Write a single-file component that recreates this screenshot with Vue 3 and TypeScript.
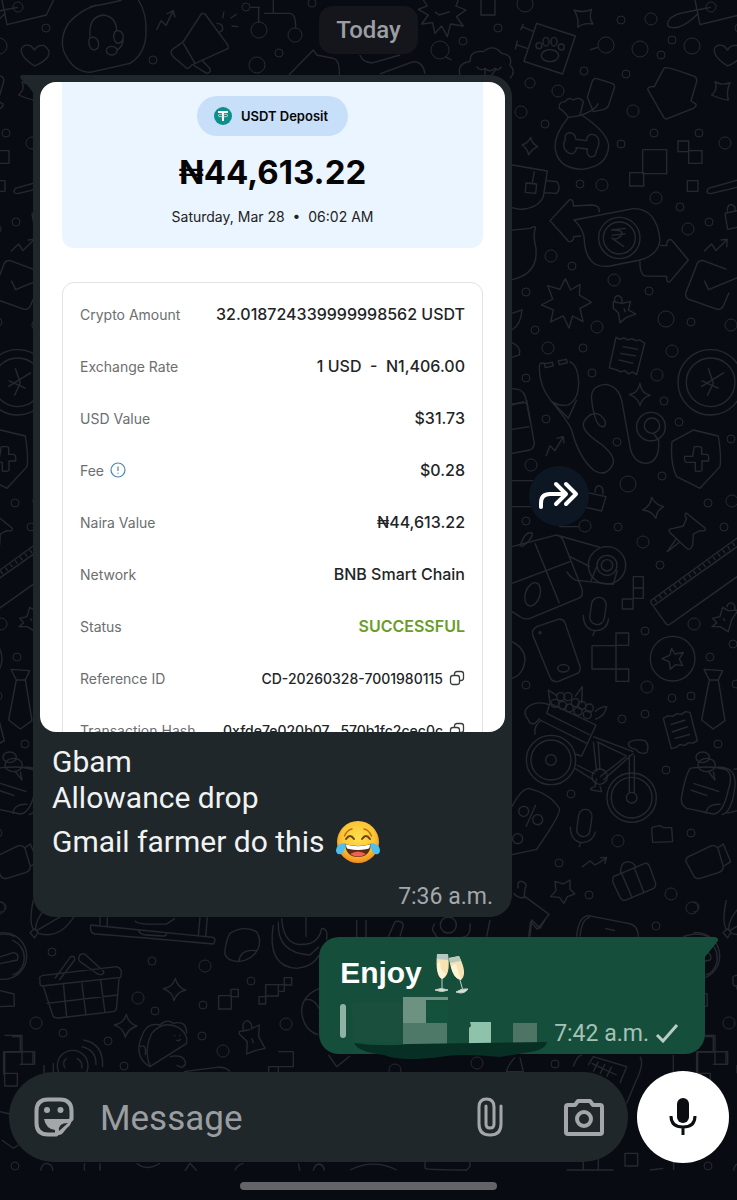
<script setup lang="ts">
interface Detail {
  label: string
  value: string
  kind?: 'info' | 'success' | 'copy'
}

const details: Detail[] = [
  { label: 'Crypto Amount', value: '32.018724339999998562 USDT' },
  { label: 'Exchange Rate', value: '1 USD \u00a0- \u00a0N1,406.00' },
  { label: 'USD Value', value: '$31.73' },
  { label: 'Fee', value: '$0.28', kind: 'info' },
  { label: 'Naira Value', value: '₦44,613.22' },
  { label: 'Network', value: 'BNB Smart Chain' },
  { label: 'Status', value: 'SUCCESSFUL', kind: 'success' },
  { label: 'Reference ID', value: 'CD-20260328-7001980115', kind: 'copy' },
  { label: 'Transaction Hash', value: '0xfde7e020b07...570b1fc2cec0c', kind: 'copy' },
]

type Dot = [number, number, number]

// Bubbles scattered between the wallpaper doodles: x, y, radius.
const dots: Dot[] = [
  [525, 4, 8], [621, 20, 4], [651, 19, 6], [711, 7, 5], [606, 45, 8], [640, 49, 8], [672, 40, 4], [661, 55, 4],
  [692, 46, 8], [584, 71, 4], [626, 74, 4], [530, 83, 5], [558, 91, 6], [521, 112, 6], [545, 124, 4], [633, 111, 6],
  [654, 133, 4], [699, 133, 4], [621, 144, 4], [725, 143, 6], [580, 184, 4], [602, 185, 6], [656, 198, 6],
  [680, 207, 4], [688, 229, 6], [709, 222, 4], [551, 256, 6], [572, 266, 4], [614, 280, 6], [649, 291, 4],
  [526, 292, 4], [597, 327, 6], [535, 330, 4], [666, 319, 8], [691, 322, 4], [731, 325, 6], [548, 348, 6],
  [583, 348, 4], [672, 351, 6], [592, 373, 4], [657, 375, 6], [526, 378, 4], [664, 401, 4], [546, 419, 4],
  [531, 465, 6], [617, 442, 4], [679, 422, 4], [731, 439, 4], [628, 484, 8], [662, 476, 4], [708, 503, 4],
  [732, 501, 6], [724, 527, 4], [526, 521, 4], [585, 526, 6], [618, 527, 4], [643, 542, 6], [660, 565, 4],
  [694, 624, 6], [645, 631, 4], [710, 657, 4], [733, 644, 4], [526, 685, 4], [647, 687, 6], [622, 719, 4],
  [645, 714, 4], [672, 698, 4], [691, 696, 4], [736, 684, 4], [718, 744, 4], [666, 770, 4], [571, 794, 4],
  [618, 841, 6], [691, 833, 4], [559, 863, 4], [589, 895, 4], [671, 894, 6], [692, 908, 6], [656, 926, 4],
  [52, 952, 4], [152, 961, 4], [205, 966, 6], [251, 981, 4], [138, 998, 6], [203, 1005, 4], [155, 1011, 4],
  [286, 1024, 6], [202, 1036, 4], [223, 1051, 6], [36, 1023, 6], [63, 1033, 4], [108, 1041, 4], [124, 1066, 4],
  [15, 1166, 4], [1, 907, 5], [477, 1063, 6], [555, 1064, 4], [395, 1070, 6], [46, 28, 4], [153, 60, 4],
  [279, 53, 4], [257, 65, 8], [246, 7, 4], [259, 30, 8], [295, 35, 7], [312, 3, 4], [463, 41, 4], [440, 50, 9],
  [498, 28, 4],
]

const berries: Dot[] = [
  [165, 70, 12], [182, 50, 12], [188, 76, 12], [204, 50, 12], [208, 84, 12], [226, 68, 12], [234, 94, 12],
  [246, 76, 12], [262, 104, 12], [268, 84, 12],
]
</script>

<template>
  <main class="chat">
    <svg class="wallpaper" aria-hidden="true">
      <defs>
        <g id="doodles">
          <circle v-for="(d, i) in dots" :key="i" :cx="d[0]" :cy="d[1]" :r="d[2]" />
          <g class="fine" transform="scale(.3333)">
            <path d="M270 20Q330 10 365 0M205 70Q240 30 290 15M205 70Q180 110 190 150Q215 215 270 217L390 190Q440 160 438 90Q440 40 415 0" />
            <path d="M270 110Q265 50 310 45Q350 50 350 95M268 115Q262 140 280 150Q300 150 295 125Q285 105 268 115M345 95Q335 115 350 130Q372 130 370 105Q360 85 345 95M370 120Q365 145 350 150" />
            <ellipse cx="335" cy="152" rx="16" ry="13" />
            <path d="M470 90L483 62L498 76L520 32M500 42L520 32L525 52" />
            <path d="M605 40L550 125L515 150Q510 160 520 170L560 205Q570 205 575 195L685 145Q685 135 680 130L615 42ZM550 130L585 190M580 195L620 220Q640 215 625 200L605 180M650 70Q670 70 668 90L655 100M672 35L668 55M692 55L710 42M695 78L715 80" />
            <path d="M752 22H780M792 40H870Q888 42 887 85M776 22V68M820 0V38M867 225L940 150L950 165L1000 175Q1020 180 1018 225M1080 165Q1090 190 1120 188L1200 165M1140 222L1240 185Q1270 185 1275 222" />
            <path d="M1270 0L1282 18L1255 28L1285 45L1265 72L1298 68L1305 100L1325 78L1342 110L1352 72L1390 78L1370 50L1398 30L1368 18L1375 0M1305 35L1318 45L1350 35M1443 0V45H1485V0M1335 170L1355 180" />
            <path d="M1380 225Q1370 190 1410 185Q1410 150 1450 155Q1480 130 1505 160Q1540 165 1530 195Q1550 215 1530 235M1430 200q10 15 25 5q15 15 30 0q10 10 20-5M1455 225V205M1475 225L1490 205" />
          </g>
          <g class="fine" transform="translate(500 0) scale(.3333)">
            <path d="M222 30Q250 40 275 28Q265 55 279 72Q250 68 233 82Q238 55 222 30ZM66 435Q84 430 92 412Q95 430 113 440Q95 448 86 465Q82 445 66 435ZM645 245Q665 258 690 248Q678 272 685 300Q665 298 635 285Q655 268 645 245ZM420 1150Q424 1180 450 1186Q426 1192 420 1216Q414 1192 388 1183Q414 1180 420 1150Z" />
            <path d="M110 70L226 108L188 222L72 184ZM70 72L62 90M66 80L104 96M52 122L46 148M48 134L84 146M270 150L293 142" />
            <ellipse cx="150" cy="167" rx="26" ry="18" /><circle cx="117" cy="137" r="9" /><ellipse cx="138" cy="125" rx="9" ry="13" /><ellipse cx="162" cy="125" rx="9" ry="13" /><circle cx="184" cy="141" r="9" />
            <path d="M288 235L336 250Q346 254 343 264L326 316Q322 326 312 328L280 335L262 292L276 246Q280 234 288 235ZM295 310Q275 345 205 352" />
            <path d="M205 352Q165 400 165 440Q170 505 245 508Q325 500 326 435Q320 395 245 345M205 352Q190 330 178 325Q175 305 195 305Q205 290 220 300Q240 288 250 305Q245 325 240 345" />
            <path d="M228 418Q225 398 208 398Q192 402 196 420Q188 430 193 445Q205 465 220 460Q232 450 228 443L262 447Q258 465 272 471Q290 470 289 452Q300 435 295 415Q285 400 270 404Q258 412 260 422Z" />
            <path d="M495 203Q505 200 580 228Q592 232 590 245L573 303L588 312Q590 320 580 325L500 357Q493 357 490 350L443 268Q445 258 463 260L488 212Q491 205 495 203Z" />
            <path d="M683 198Q640 170 643 148Q650 130 672 138L683 150Q690 135 710 136Q735 150 722 172Q705 190 683 198Z" />
            <path d="M428 449h72v72h-72ZM389 518h42v40h-42ZM534 423h32v32h-32ZM566 452h40v38h-40ZM562 542h32v32h-32ZM20 492L142 513L130 590Q115 625 60 628L20 620M137 542L170 545Q185 562 170 580L132 578M103 514L97 548M78 549l32 3l-3 28l-31-3Z" />
            <path d="M625 565L720 538M625 565Q615 580 632 581L720 560M675 640L720 630M675 640L683 688L720 680M682 638Q680 615 693 613Q708 617 706 633M612 754L635 732L648 752L682 718M662 720L682 718L680 742" />
            <path d="M298 637Q300 615 275 615L220 618Q222 600 210 598L150 662L205 724Q220 728 221 710L243 708M222 660L400 626Q470 625 480 720Q475 765 420 780L330 798Q255 810 252 710Q245 680 222 660ZM480 736L500 737Q500 715 515 720L565 780L510 845Q498 850 500 829L435 828Q418 822 420 782" />
            <circle cx="358" cy="714" r="62" /><circle cx="358" cy="714" r="48" />
            <path d="M333 690L378 685M335 706L376 701M340 690Q375 690 362 708Q350 722 335 714L372 740" />
            <path d="M20 692L90 685Q108 675 106 685Q98 705 108 745Q115 820 40 838L20 840M36 940L66 930Q62 975 36 990M36 1028Q65 1040 58 1065L36 1072M36 1166Q70 1166 76 1190L90 1260M36 1212L78 1208" />
            <path d="M196 836L212 870L240 853L238 885L274 907L240 925L249 965L218 948L207 984L190 948L152 966L160 930L124 915L158 897L143 857L180 868Z" />
            <path d="M340 905L365 910L392 905L385 930L408 942L378 953L360 968L355 938L340 925ZM345 905Q340 888 355 887Q368 890 366 908M372 925l4 12" />
            <path d="M348 1012l12 6l12-4l12 6l12-4l12 6l12-2l14 10L410 1124l-12-8l-12 6l-12-10l-12 4l-12-6l-22-6ZM368 1040L415 1048M360 1060L408 1068M356 1080L400 1090" />
            <path d="M680 808L610 782Q598 780 592 790L557 880Q555 892 566 898L652 928Q664 930 670 918L687 878M613 842L626 869L720 830" />
            <circle cx="632" cy="1147" r="98" /><circle cx="632" cy="1147" r="73" />
            <path d="M625 1105L640 1150L622 1187M672 1118L604 1160M605 1142L656 1165" />
            <path d="M118 1105Q115 1085 135 1090M208 1085Q235 1095 236 1150Q235 1200 205 1215Q180 1220 155 1205Q118 1160 118 1105M133 1092l24-5l3 11l-24 5ZM175 1083l24-5l3 11l-24 5ZM160 1210L205 1255L230 1200M275 1200Q270 1155 320 1153Q355 1160 365 1200" />
            <path d="M505 80Q495 55 540 40L632 22M505 80Q540 95 595 40M585 0L600 74L718 45L740 0" />
          </g>
          <g class="fine" transform="translate(500 400) scale(.3333)">
            <path d="M36 15L72 5M36 88L88 80M80 0L103 130Q102 145 90 150L36 160M138 168L150 137L165 152L190 110M170 115L190 110L192 130" />
            <path d="M155 5Q205 65 215 90Q235 170 280 210Q320 235 340 190Q345 165 300 130Q240 90 252 65Q275 30 300 45Q325 65 312 80Q285 85 275 0M365 0L392 150Q405 190 440 190Q480 185 476 120L460 100" />
            <circle cx="453" cy="80" r="43" /><circle cx="456" cy="77" r="23" />
            <path d="M516 125L580 90L655 108Q665 170 660 200L600 265L530 230Q510 190 516 125ZM583 140h16q6 0 6 6v17h15q7 2 6 10v10h-20v28q-5 5-20 2v-26h-28q-6-4-4-18h24Z" />
            <path d="M262 278L318 290L305 333L258 322M285 278Q285 258 298 257Q312 262 308 283M36 242H100M36 320H95M178 380H236M60 440Q75 390 98 400Q95 420 65 440" />
            <path d="M455 292Q466 315 491 320Q470 330 468 355Q455 332 428 330Q452 318 455 292Z" />
            <path d="M560 340L616 385Q618 395 600 392L580 402L578 435Q570 455 560 445L512 400Q500 385 520 385L550 378L560 355Q550 345 560 338M540 425L502 455L530 415" />
            <path d="M720 408L455 600Q450 605 455 612L497 670Q503 678 511 672L720 524M463 616L720 434" />
            <path class="ticks" d="M465 602L720 420" />
            <path d="M36 440L165 406Q180 404 188 418L247 570Q250 590 235 595L90 655Q70 660 60 650L36 635M36 550L210 485M105 430L178 610" />
            <ellipse cx="98" cy="583" rx="22" ry="36" transform="rotate(18 98 583)" />
            <circle cx="321" cy="496" r="56" /><circle cx="321" cy="496" r="30" /><circle cx="321" cy="496" r="17" />
            <path d="M180 408L300 442M210 470L270 500M200 515Q220 545 240 542L340 553L352 510M290 500L272 545" />
            <rect x="272" y="592" width="44" height="82" rx="22" transform="rotate(8 294 633)" />
            <path d="M250 645Q250 690 288 692Q322 690 326 655M284 692L278 708M400 530h30v65h-30ZM400 564h30M367 597h32v30h-32ZM276 737h72v70h-72ZM348 699h38v37h-38ZM348 807h38v37h-38Z" />
            <path d="M110 680L175 658Q190 656 195 668L240 800Q243 815 232 820L175 844Q160 848 152 836L98 705Q94 690 110 680Z" />
            <ellipse cx="190" cy="805" rx="17" ry="11" /><circle cx="120" cy="698" r="3" />
            <circle cx="518" cy="776" r="67" />
            <path d="M515 745l10 17l25-5l-12 20l10 20l-22-3l-15 14l-3-22l-22-10l23-10ZM638 655L660 650L668 622L685 632L715 630L695 660L685 695L660 680L636 680L650 668ZM680 622Q685 605 698 610Q710 620 702 632M670 655l5 8" />
            <path d="M612 808L668 812L655 840L628 840ZM628 840L605 960L640 987L675 962L655 840M36 725Q75 745 75 780Q70 825 36 835" />
          </g>
          <g class="fine" transform="translate(500 680) scale(.3333)">
            <circle cx="153" cy="240" r="74" /><circle cx="153" cy="240" r="60" /><circle cx="153" cy="240" r="16" />
            <circle cx="395" cy="353" r="74" /><circle cx="395" cy="353" r="61" /><circle cx="395" cy="353" r="16" />
            <circle cx="299" cy="290" r="23" />
            <circle v-for="(b, i) in berries" :key="i" :cx="b[0]" :cy="b[1]" :r="b[2]" />
            <path d="M280 170L400 215M290 185L380 228M380 228L300 290M400 220L310 300M280 185L290 275M295 190L300 270M388 225V338M403 225V338M225 265L280 300M230 255L285 282M385 190Q400 175 435 182Q450 195 440 218Q420 225 408 208Q385 205 385 190ZM290 295L285 320Q265 325 275 330L305 335L300 318" />
            <path d="M150 70L288 135L245 228L225 222M120 120L260 190M150 70L140 100L270 165M150 75Q110 60 85 80Q65 95 85 120Q90 135 105 130L120 115M105 165Q100 135 125 120M150 68L145 30L172 48M225 50L247 20L245 70M285 95Q300 80 320 80Q315 110 285 118" />
            <path d="M490 115l14-8l14 2l12-8l14 2l12-8l14 2L592 182l-14 8l-12-2l-12 8l-14-2l-12 8l-14 4ZM512 134L556 120M516 156L564 140M524 176L570 163" />
            <path d="M570 265Q640 255 680 270Q700 285 685 330Q670 400 640 402L560 385Q540 375 545 350Q555 290 570 265ZM580 310L658 335M572 330L622 347M645 262Q711 255 705 320Q695 400 665 404M618 402Q620 370 662 373M700 268Q730 260 740 300M680 400L740 385" />
            <ellipse cx="608" cy="232" rx="20" ry="16" /><ellipse cx="620" cy="255" rx="26" ry="20" />
            <path d="M625 275L645 300L640 275M36 380Q60 330 85 325Q150 340 178 385Q185 400 110 508L36 524M107 375L78 440" />
            <circle cx="71" cy="394" r="15" /><circle cx="113" cy="419" r="15" /><circle cx="53" cy="476" r="15" />
            <rect x="233" y="388" width="40" height="82" rx="20" transform="rotate(8 253 429)" />
            <path d="M211 440Q212 485 248 488Q280 485 286 455M242 488L237 502M455 447Q455 440 465 440L480 437L490 443L515 443L518 485L458 487ZM245 562L270 543L285 555L318 535M300 533L320 532L314 552" />
            <path d="M565 530L635 497Q650 495 655 508L670 560Q670 572 655 578L600 595Q585 598 580 585L558 545Q556 535 565 530ZM652 505L670 492L692 545L672 558" />
            <path d="M340 590L435 550Q445 548 449 560L467 610Q468 622 458 627L375 661Q365 662 360 652L338 605ZM362 580Q360 550 380 545Q400 545 408 562M365 580L395 650M403 563L432 638" />
            <path d="M165 604L190 612L210 600L210 628L225 642L202 650L192 670L178 652L152 650L168 632ZM55 625Q50 600 68 605Q85 615 75 625L72 655M40 640Q60 660 75 650L147 703L112 748L92 725L86 770M230 770Q235 710 265 707L385 730Q415 735 415 770M240 770Q245 715 270 712M315 745L345 752M550 770Q590 755 625 770" />
          </g>
          <g class="fine" transform="translate(0 900) scale(.3333)">
            <path d="M100 0Q85 70 102 90M140 20Q105 60 107 90M110 92L190 45M115 100Q180 120 225 45M90 98l12-12l12 10l-10 18Z" />
            <circle cx="10" cy="168" r="70" />
            <path d="M-30 180L40 158Q58 160 52 180L-20 195M0 272L42 282L43 318L0 320" />
            <path d="M272 75L640 112Q650 118 640 132Q400 110 285 102Q268 98 272 75M300 52V77M322 52V80M600 52L595 107M622 52L617 109M405 62Q410 75 500 72L525 55M415 90Q420 105 440 105L490 108Q500 108 500 98" />
            <path d="M690 100Q730 75 770 95Q785 120 775 145Q760 180 715 185Q670 180 675 150Q680 115 690 100ZM717 183Q722 145 770 152M845 55Q850 150 930 130Q960 120 965 85Q985 85 980 120M835 65Q830 160 930 165L957 140M820 75Q800 200 890 205Q940 200 957 165M918 52V110" />
            <path d="M120 240Q115 228 130 226L350 200Q370 205 362 232L125 258Q118 255 120 240ZM130 260L158 345Q160 355 175 354L340 335Q350 332 350 320L357 235M190 250L200 350M245 245L258 345M302 240L315 338M140 310L352 285M165 235L212 170Q225 165 224 180L178 240M240 165Q232 175 240 185L290 220Q310 230 312 215L255 163Q245 160 240 165" />
            <path d="M526 235Q532 262 557 270Q530 276 522 302Q518 276 490 266Q518 262 526 235ZM379 343Q385 370 411 378Q384 386 376 412Q372 386 343 375Q372 370 379 343Z" />
            <path d="M656 287h38v40h-38ZM693 268h22v22h-22ZM797 254h38v34h-38ZM777 290h20v22h-20ZM835 254h18v20h-18ZM853 233h22v22h-22ZM14 406h52v50h-52v102h38v-38h-38M66 455h38v38h-38ZM835 455h45v45h-45v20M806 520v-20h30" />
            <path d="M450 500L560 430Q565 400 535 382Q490 360 455 400Q430 450 450 500ZM450 500Q400 470 425 410Q440 365 480 375Q500 355 520 370Q560 360 560 400M420 440Q440 430 436 465M510 470Q550 460 557 490Q550 510 530 495M552 515L650 502Q680 500 690 515M524 405v4M540 405v4M528 420Q538 425 542 416" />
            <path d="M718 395L745 390L778 375L776 410L795 445L765 452L740 462L742 425L718 402ZM730 392Q725 365 742 362Q758 368 755 388M756 415l4 14" />
            <circle cx="218" cy="497" r="46" />
            <path d="M250 420Q310 430 308 500M245 440Q290 450 288 495M230 475Q250 485 245 505M200 475Q185 485 195 505M132 495V520M160 490V520M960 265Q905 285 905 335Q910 390 955 405M915 300Q940 290 960 330" />
            <path d="M0 635L30 642M5 720L40 745L55 735M122 812Q125 790 140 790Q158 792 158 812M255 790Q250 805 255 812M300 790V812M410 790Q440 815 480 790M555 812L570 790L590 812M705 812Q710 795 730 790M895 790L900 812M940 812Q945 792 957 792Q972 795 973 812" />
          </g>
          <g class="fine" transform="translate(310 920) scale(.3333)">
            <path d="M140 0V52M168 0V52M235 50L255 5Q275 0 280 15L270 50M375 10Q360 30 375 40Q380 60 400 52M455 52Q485 50 480 10M540 0L530 50M660 50L665 0L690 25L705 0" />
            <circle cx="415" cy="15" r="24" />
            <path d="M55 405L80 440L120 408M790 440Q800 410 815 405M835 435L850 410L950 440L930 490M845 430L920 465M865 425L850 455M885 432L870 462M905 440L890 470M990 410Q1005 430 975 490L950 550M1090 405V465M1160 395h50v-45h-25M1208 395h40v38h-40M1160 395V465M945 700h38v38h-38ZM1045 700h46v50M770 750H910M820 700V750M865 710V750M1020 750L1060 745M345 725V745Q350 750 470 750L480 740V725M120 750Q190 715 260 750M615 412Q590 440 590 455L640 455L630 412M1185 60Q1230 80 1220 130Q1210 160 1187 165" />
          </g>
        </g>
        <pattern id="tile" width="693" height="2400" patternUnits="userSpaceOnUse">
          <use href="#doodles" />
          <use href="#doodles" x="-693" />
        </pattern>
      </defs>
      <rect width="100%" height="100%" fill="url(#tile)" stroke="none" />
    </svg>

    <section class="thread" aria-label="Conversation">
      <time class="day">Today</time>

      <div class="incoming-row">
        <article class="bubble incoming">
          <svg class="tail-in" viewBox="0 0 40 30" aria-hidden="true">
            <path d="M2 0H40V30H14V20Q12 14 1 4Q-1 0 2 0Z" />
          </svg>
          <div class="receipt">
            <div class="inner">
              <header class="summary">
                <span class="token">
                  <svg class="tether" viewBox="0 0 18 18" aria-hidden="true">
                    <circle cx="9" cy="9" r="9" fill="#0c8f86" />
                    <path d="M4 4h10v2h-4v8H8V6H4Z" fill="#fff" />
                    <ellipse cx="9" cy="8.500" rx="5" ry="1.400" fill="none" stroke="#d5eeee" stroke-width=".8" />
                  </svg>
                  USDT Deposit
                </span>
                <strong class="amount">₦44,613.22</strong>
                <p class="when">Saturday, Mar 28&nbsp; •&nbsp; 06:02 AM</p>
              </header>
              <dl class="details">
                <div v-for="d in details" :key="d.label" class="detail" :class="d.kind">
                  <dt>
                    {{ d.label }}
                    <svg v-if="d.kind === 'info'" class="info-icon" viewBox="0 0 16 16" aria-hidden="true">
                      <circle cx="8" cy="8" r="7" />
                      <path d="M8 4.500V9M8 10.700V11.700" />
                    </svg>
                  </dt>
                  <dd>
                    {{ d.value }}
                    <button v-if="d.kind === 'copy'" class="copy-btn" type="button" :aria-label="'Copy ' + d.label">
                      <svg viewBox="0 0 16 16" aria-hidden="true">
                        <rect x="1.500" y="5.500" width="9" height="9" rx="2.500" />
                        <path d="M5.500 5.500V4Q5.500 1.500 8 1.500H12Q14.500 1.500 14.500 4V8Q14.500 10.500 12 10.500H10.500" />
                      </svg>
                    </button>
                  </dd>
                </div>
              </dl>
            </div>
          </div>
          <div class="caption">
            <p>Gbam</p>
            <p>Allowance drop</p>
            <p class="last">
              Gmail farmer do this
              <svg class="joy" viewBox="0 0 44 44" role="img" aria-label="Face with tears of joy">
                <defs>
                  <radialGradient id="skin" cx=".5" cy=".4" r=".6">
                    <stop offset="0" stop-color="#fddf4d" />
                    <stop offset=".65" stop-color="#fcc534" />
                    <stop offset="1" stop-color="#f08a1e" />
                  </radialGradient>
                </defs>
                <circle cx="22" cy="22" r="21" fill="url(#skin)" />
                <path d="M8.500 16Q11 10 16 9M35.500 16Q33 10 28 9" class="brow" />
                <path d="M10 19Q14 13 18 19M26 19Q30 13 34 19" class="eye" />
                <path d="M9 24Q22 28 35 24Q34 37 22 37Q10 37 9 24Z" fill="#5a2c12" />
                <path d="M10 24.500Q22 28 34 24.500Q34 29 31 29Q22 31 13 29Q10 29 10 24.500Z" fill="#fff" />
                <path d="M14 34Q22 29 30 34Q22 39 14 34Z" fill="#ef5f55" />
                <path d="M10 23Q1 23 0 30Q0 35 5 34Q9 32 10 23Z" fill="#4dc1ee" />
                <path d="M34 23Q43 23 44 30Q44 35 39 34Q35 32 34 23Z" fill="#4dc1ee" />
              </svg>
            </p>
          </div>
          <time class="stamp">7:36 a.m.</time>
        </article>
        <button class="forward" type="button" aria-label="Forward">
          <svg viewBox="0 0 60 60" aria-hidden="true">
            <path d="M12 41V37Q12 28 21 28H37M27 18L37 28L27 38M37 18L47 28L37 38" />
          </svg>
        </button>
      </div>

      <article class="bubble outgoing">
        <svg class="tail-out" viewBox="0 0 40 26" aria-hidden="true">
          <path d="M0 0H36Q41 1 38 5L26 20V26H0Z" />
        </svg>
        <p class="enjoy">
          Enjoy
          <svg class="glasses" viewBox="0 0 36 44" role="img" aria-label="Clinking glasses">
            <path d="M3 3L14 3Q17 25 8 28Q1 25 3 3Z" fill="#f6e3b4" />
            <path d="M3 3L14 3L14 9L3 8Z" fill="#b7c8c0" />
            <path d="M3 13Q3 25 8 28Q10 27 12 22Q6 22 6 10Z" fill="#fdf3d6" />
            <path d="M8 28V38M1 39Q7 36 14 39Q8 42 1 39Z" class="glass-line" />
            <path d="M15 7L25 5Q34 23 27 29Q18 28 15 7Z" fill="#f6e3b4" />
            <path d="M15 7L25 5L27 10L16 12Z" fill="#b7c8c0" />
            <path d="M17 15Q19 27 27 29Q25 22 22 13Z" fill="#fdf3d6" />
            <path d="M26 29L29 40M22 41Q28 37 34 38Q30 44 22 41Z" class="glass-line" />
          </svg>
        </p>
        <div class="foot">
          <svg class="smudge" viewBox="0 0 208 66" aria-hidden="true">
            <rect x="0" y="9" width="6" height="34" rx="3" fill="#8fb2a4" />
            <path d="M12 8H63V47H14Z" fill="#1a4f3e" />
            <path d="M63 2H108V5H86V28H63Z" fill="#6e9282" />
            <path d="M86 6Q95 8 108 5V28H86Z" fill="#15523d" />
            <rect x="63" y="28" width="44" height="21" fill="#4e7867" />
            <path d="M130 27H151V49H129V33L131 31Z" fill="#8fc2ab" />
            <rect x="173" y="28" width="24" height="21" fill="#4d7465" />
            <path d="M14 48Q40 52 70 49L207 47Q206 53 196 56L160 62Q120 58 100 62Q60 67 44 60Q18 57 14 48Z" fill="#082f23" />
          </svg>
          <time>7:42 a.m.</time>
          <svg class="sent" viewBox="0 0 24 20" role="img" aria-label="Sent">
            <path d="M2 12L8 18L22 2" />
          </svg>
        </div>
      </article>
    </section>

    <form class="composer" @submit.prevent>
      <div class="field">
        <button class="icon-btn" type="button" aria-label="Stickers">
          <svg viewBox="0 0 40 40" aria-hidden="true">
            <path class="line" d="M14 2.500H26Q37.500 2.500 37.500 14V22L22 37.500H14Q2.500 37.500 2.500 26V14Q2.500 2.500 14 2.500Z" />
            <circle cx="13" cy="13" r="3" class="solid" />
            <circle cx="26.500" cy="13" r="3" class="solid" />
            <path class="solid" d="M10 22H37Q38 28 33 31L28 37Q24 39 21 38V33Q12 32 10 22Z" />
            <path d="M25 34Q24 26 34 26Z" fill="#20272a" />
          </svg>
        </button>
        <input type="text" placeholder="Message" aria-label="Message" />
        <button class="icon-btn" type="button" aria-label="Attach">
          <svg viewBox="0 0 40 40" aria-hidden="true">
            <path class="line thin" d="M31 9V27Q31 38 20 38Q9 38 9 27V10Q9 2 16.500 2Q24 2 24 10V27Q24 31 20 31Q16 31 16 27V9" />
          </svg>
        </button>
        <button class="icon-btn" type="button" aria-label="Camera">
          <svg viewBox="0 0 40 40" aria-hidden="true">
            <path class="line" d="M4 8H11L14 4H26L29 8H36Q38 8 38 10V35Q38 37 36 37H4Q2 37 2 35V10Q2 8 4 8Z" />
            <circle cx="20" cy="22" r="7" class="line" />
          </svg>
        </button>
      </div>
      <button class="mic" type="button" aria-label="Record voice message">
        <svg viewBox="0 0 40 40" aria-hidden="true">
          <rect x="14" y="1" width="12" height="25" rx="6" />
          <path d="M8 19Q8 30 20 30Q32 30 32 19M20 30V38" />
        </svg>
      </button>
    </form>
    <div class="home-bar"></div>
  </main>
</template>

<style>
body {
  margin: 0;
  background: #090b13;
}
</style>

<style scoped>
.chat {
  position: relative;
  min-height: 100vh;
  display: flex;
  flex-direction: column;
  box-sizing: border-box;
  background: #090b13;
  font-family: Roboto, sans-serif;
  overflow: hidden;
}
.chat > * {
  position: relative;
}
.chat > .wallpaper {
  position: absolute;
  inset: 0;
  width: 100%;
  height: 100%;
  fill: none;
  stroke: #25282e;
  stroke-width: 1;
}
.fine {
  stroke-width: 4;
  stroke-linejoin: round;
}
.ticks {
  stroke-width: 12;
  stroke-dasharray: 4 14;
}
p,
dl,
dd {
  margin: 0;
}
button {
  border: 0;
  padding: 0;
  background: none;
  font: inherit;
  color: inherit;
}
svg {
  display: block;
  flex: none;
}
.thread {
  flex: 1;
  display: flex;
  flex-direction: column;
}
.day {
  align-self: center;
  margin-top: 6px;
  padding: 10px 17px;
  border-radius: 14px;
  background: #14161b;
  color: #9b9ea2;
  font-size: 24px;
  font-weight: 500;
  line-height: 28px;
}
.incoming-row {
  display: flex;
  align-items: center;
  gap: 17px;
  margin-top: 21px;
  padding: 0 148px 0 33px;
}
.bubble {
  position: relative;
  box-sizing: border-box;
}
.incoming {
  flex: 1;
  min-width: 0;
  padding: 7px 7px 6px;
  border-radius: 22px;
  background: #20272a;
}
.tail-in {
  position: absolute;
  top: 0;
  left: -13px;
  width: 40px;
  height: 30px;
  fill: #20272a;
}
.receipt {
  position: relative;
  height: 650px;
  overflow: hidden;
  border-radius: 16px;
  background: #fff;
  font-family: Inter, sans-serif;
}
.inner {
  padding: 0 22px;
}
.summary {
  display: flex;
  flex-direction: column;
  align-items: center;
  height: 166px;
  box-sizing: border-box;
  padding-top: 14px;
  border-radius: 0 0 12px 12px;
  background: #ebf5ff;
  color: #050505;
}
.token {
  display: flex;
  align-items: center;
  gap: 9px;
  height: 40px;
  padding: 0 20px 0 17px;
  border-radius: 20px;
  background: #c8dffa;
  font-size: 13px;
  font-weight: 600;
}
.tether {
  width: 18px;
  height: 18px;
}
.amount {
  margin-top: 16px;
  font-size: 33px;
  font-weight: 700;
  line-height: 40px;
}
.when {
  margin-top: 15px;
  font-size: 14px;
  line-height: 20px;
  color: #222;
}
.details {
  margin-top: 34px;
  padding: 5px 17px;
  border: 1px solid #e2e3e5;
  border-radius: 12px;
}
.detail {
  display: flex;
  align-items: center;
  justify-content: space-between;
  height: 52px;
  white-space: nowrap;
}
dt,
dd {
  display: flex;
  align-items: center;
  gap: 6px;
}
dt {
  font-size: 14px;
  color: #6c6e70;
}
dd {
  font-size: 16px;
  font-weight: 500;
  color: #222426;
}
.success dd {
  font-weight: 600;
  color: #6b9c2a;
}
.copy dd {
  font-size: 14px;
}
.info-icon {
  width: 16px;
  height: 16px;
  fill: none;
  stroke: #4a86b5;
  stroke-width: 1.2;
}
.copy-btn svg {
  width: 16px;
  height: 16px;
  fill: none;
  stroke: #3a3c3e;
  stroke-width: 1.3;
}
.caption {
  padding: 12px 12px 0;
  color: #f1f3f3;
  font-size: 30px;
  line-height: 36px;
}
.caption .last {
  display: flex;
  align-items: center;
  gap: 12px;
  height: 52px;
}
.joy {
  width: 44px;
  height: 44px;
}
.brow,
.eye {
  fill: none;
  stroke: #70421a;
  stroke-width: 2;
  stroke-linecap: round;
}
.brow {
  stroke: #b86f1a;
  stroke-width: 1.5;
}
.stamp {
  display: block;
  margin-top: 15px;
  padding-right: 12px;
  text-align: right;
  color: #a3a8aa;
  font-size: 23px;
  line-height: 28px;
}
.forward {
  width: 60px;
  height: 60px;
  flex: none;
  border-radius: 50%;
  background: #0d1724;
}
.forward svg {
  width: 60px;
  height: 60px;
  fill: none;
  stroke: #fff;
  stroke-width: 4;
  stroke-linecap: round;
  stroke-linejoin: round;
}
.outgoing {
  align-self: flex-end;
  height: 117px;
  margin: 20px 32px 0 0;
  padding: 14px 26px 0 21px;
  border-radius: 20px;
  background: #154f3b;
}
.tail-out {
  position: absolute;
  top: 0;
  right: -14px;
  width: 40px;
  height: 26px;
  fill: #154f3b;
}
.enjoy {
  display: flex;
  align-items: center;
  gap: 12px;
  height: 44px;
  color: #fff;
  font-family: "Liberation Sans", sans-serif;
  font-size: 30px;
  font-weight: 700;
}
.glasses {
  width: 36px;
  height: 44px;
}
.glass-line {
  fill: #d8e0d8;
  stroke: #c3cfc6;
  stroke-width: 1;
}
.foot {
  position: relative;
  display: flex;
  gap: 6px;
  color: #a6c2b6;
  font-size: 23px;
  line-height: 28px;
}
.foot time {
  margin-top: 25px;
}
.smudge {
  width: 208px;
  height: 66px;
}
.sent {
  width: 24px;
  height: 20px;
  margin-top: 28px;
  fill: none;
  stroke: #b9cdc4;
  stroke-width: 3;
}
.composer {
  display: flex;
  align-items: center;
  gap: 9px;
  padding: 0 8px 0 9px;
}
.field {
  flex: 1;
  min-width: 0;
  display: flex;
  align-items: center;
  gap: 54px;
  height: 90px;
  box-sizing: border-box;
  padding: 0 24px 0 25px;
  border-radius: 45px;
  background: #20272a;
}
.field input {
  flex: 1;
  min-width: 0;
  margin-left: -28px;
  padding: 4px 0 0;
  border: 0;
  outline: 0;
  background: none;
  color: #e6e8e9;
  font-family: Roboto, sans-serif;
  font-size: 35px;
  line-height: 44px;
}
.field input::placeholder {
  color: #9a9ea1;
  opacity: 1;
}
.icon-btn svg {
  width: 40px;
  height: 40px;
}
.line {
  fill: none;
  stroke: #a3a7a9;
  stroke-width: 4;
  stroke-linejoin: round;
  stroke-linecap: round;
}
.line.thin {
  stroke-width: 3;
}
.solid {
  fill: #a3a7a9;
}
.mic {
  display: grid;
  place-items: center;
  width: 92px;
  height: 92px;
  flex: none;
  border-radius: 50%;
  background: #fff;
}
.mic svg {
  width: 40px;
  height: 40px;
  fill: #0b0d10;
}
.mic path {
  fill: none;
  stroke: #0b0d10;
  stroke-width: 3;
}
.home-bar {
  width: 35%;
  height: 8px;
  margin: 19px auto 10px;
  border-radius: 4px;
  background: #626468;
}
</style>
